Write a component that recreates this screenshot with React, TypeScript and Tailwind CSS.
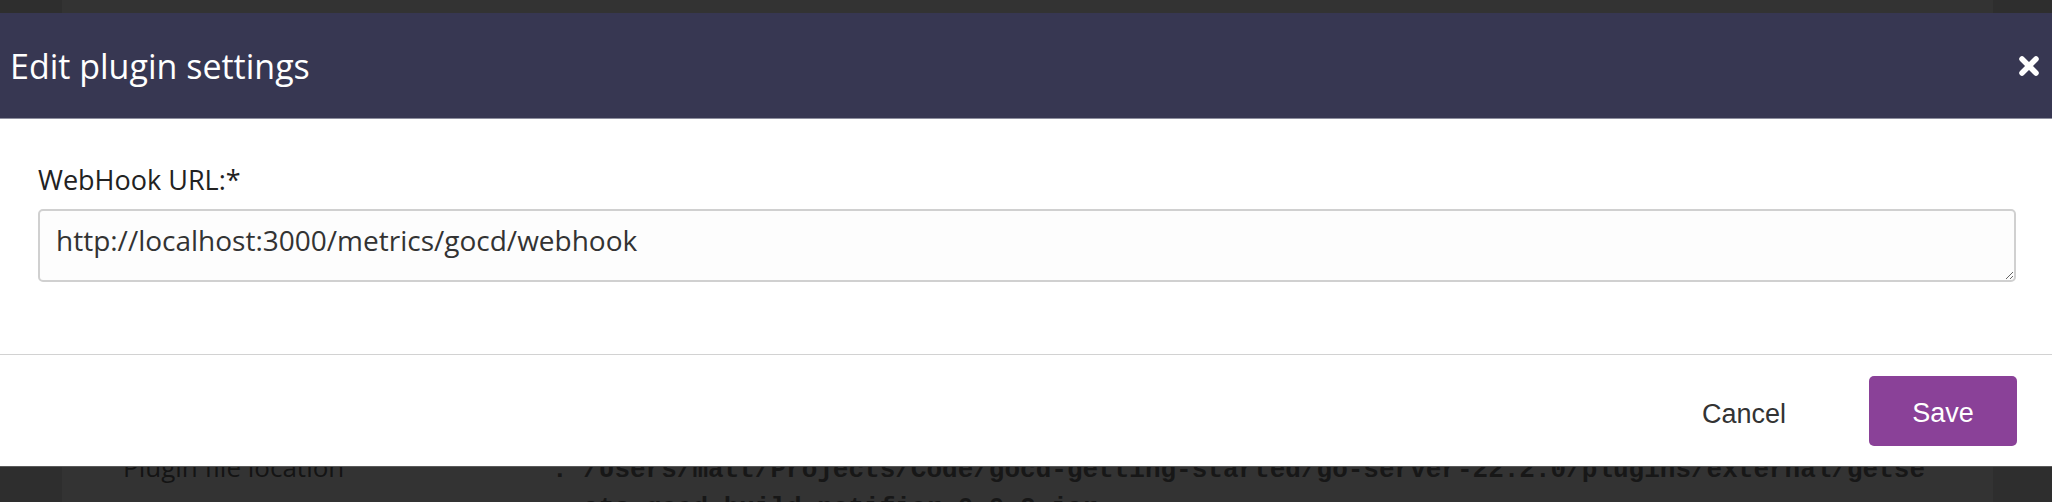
export default function App() {
  return (
    <div className="relative h-[502px] w-[2052px] overflow-hidden bg-[#333]">
      {/* page behind the modal backdrop */}
      <div className="flex h-full">
        <div className="w-[62px] bg-[#2e2e2e]" />
        <div className="flex-1 bg-[#333] pl-[61px] pt-[448px]">
          <div className="flex items-baseline">
            <div className="w-[429px] font-['Open_Sans',sans-serif] text-[26px] leading-[38px] text-[#141414]">
              Plugin file location
            </div>
            <div className="whitespace-pre font-['Liberation_Mono',monospace] text-[26px] font-bold leading-[38px] text-[#171717]">
              {': /Users/matt/Projects/Code/gocd-getting-started/go-server-22.2.0/plugins/external/getse\n  ats-gocd-build-notifier-0.0.2.jar'}
            </div>
          </div>
        </div>
        <div className="w-[59px] bg-[#2e2e2e]" />
      </div>

      {/* modal */}
      <div className="absolute left-0 right-0 top-[13px] border-b border-[#5a5a5a] bg-white">
        <div className="flex h-[106px] items-center justify-between border-b border-[#8d8e9e] bg-[#373752] pl-[10px] pr-[11px]">
          <h2 className="font-['Open_Sans',sans-serif] text-[34px] font-normal leading-none text-white">
            Edit plugin settings
          </h2>
          <button className="flex h-[24px] w-[24px] items-center justify-center" aria-label="Close">
            <svg width="22" height="22" viewBox="0 0 22 22">
              <path d="M4 4 L18 18 M18 4 L4 18" stroke="#fff" strokeWidth="5.5" strokeLinecap="round" />
            </svg>
          </button>
        </div>

        <div className="pb-[72px] pl-[38px] pr-[36px] pt-[40px]">
          <label className="block font-['Open_Sans',sans-serif] text-[27px] leading-[42px] text-[#222]">
            WebHook URL:*
          </label>
          <textarea
            readOnly
            rows={1}
            defaultValue="http://localhost:3000/metrics/gocd/webhook"
            className="mt-[8px] block h-[73px] w-full resize-y rounded-[5px] border-2 border-[#d0d0d0] bg-[#fdfdfd] px-[16px] pt-[8px] font-['Open_Sans',sans-serif] text-[28px] leading-[42px] text-[#333] outline-none"
          />
        </div>

        <div className="flex h-[112px] items-center justify-end border-t border-[#d2d2d2] pr-[35px]">
          <button className="mr-[83px] pt-[8px] font-['Liberation_Sans',Arial,sans-serif] text-[27px] text-[#333]">
            Cancel
          </button>
          <button className="h-[70px] w-[148px] rounded-[5px] bg-[#8a4198] pt-[6px] font-['Liberation_Sans',Arial,sans-serif] text-[27px] text-white">
            Save
          </button>
        </div>
      </div>
    </div>
  );
}
